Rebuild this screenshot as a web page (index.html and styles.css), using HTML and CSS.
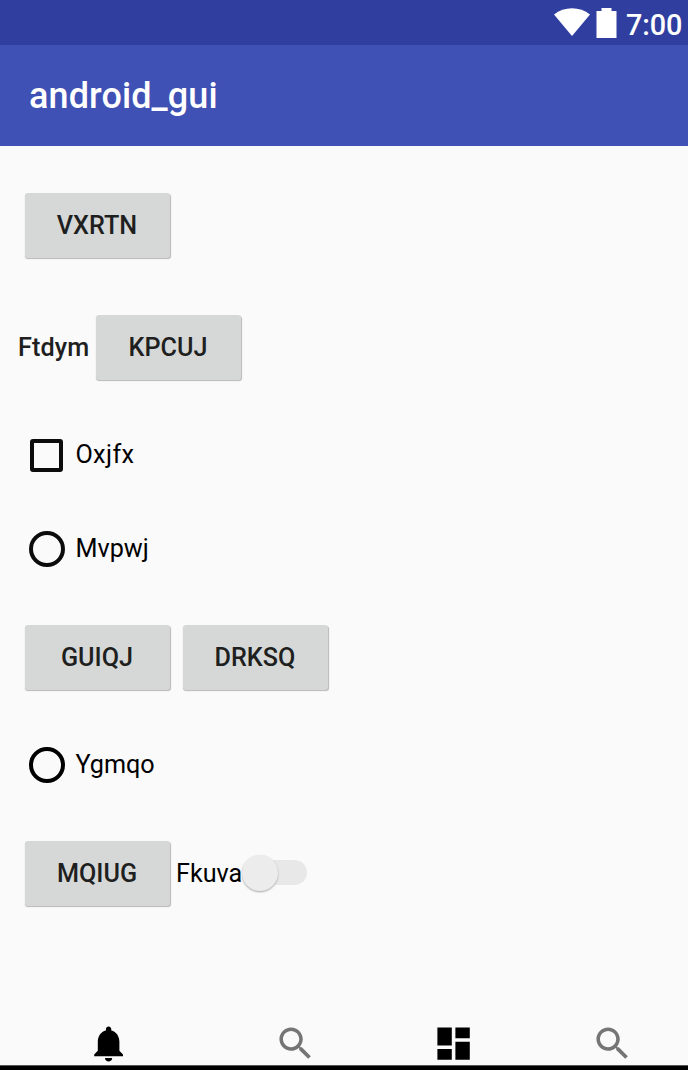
FILE: index.html
```html
<!DOCTYPE html>
<html lang="en">
<head>
<meta charset="utf-8">
<title>android_gui</title>
<link rel="stylesheet" href="styles.css">
</head>
<body>
<div class="screen">
  <header class="status-bar">
    <svg class="wifi" viewBox="0 0 36 28"><path d="M0 6.500C10-2 26-2 36 6.500L18 28z"/></svg>
    <svg class="battery" viewBox="0 0 21 31"><path d="M5.500 0h10v3h5v27H.5V3h5z"/></svg>
    <span class="clock">7:00</span>
  </header>
  <div class="app-bar"><h1 class="title">android_gui</h1></div>
  <main class="content">
    <div class="row"><button class="button">VXRTN</button></div>
    <div class="row labelled"><span class="label">Ftdym</span><button class="button">KPCUJ</button></div>
    <label class="row option"><span class="checkbox"></span><span class="text loose">Oxjfx</span></label>
    <label class="row option"><span class="radio"></span><span class="text">Mvpwj</span></label>
    <div class="row"><button class="button">GUIQJ</button><button class="button">DRKSQ</button></div>
    <label class="row option"><span class="radio solid"></span><span class="text">Ygmqo</span></label>
    <div class="row"><button class="button">MQIUG</button><label class="switch"><span class="text">Fkuva</span><span class="toggle"><span class="track"></span><span class="thumb"></span></span></label></div>
  </main>
  <nav class="bottom-nav">
    <svg class="icon bell" viewBox="0 0 24 24"><path d="M12 22c1.100 0 2-.9 2-2h-4c0 1.100.89 2 2 2zm6-6v-5c0-3.070-1.640-5.640-4.500-6.320V4c0-.83-.67-1.500-1.500-1.500s-1.500.67-1.500 1.500v.68C7.630 5.360 6 7.920 6 11v5l-2 2v1h16v-1l-2-2z"/></svg>
    <svg class="icon find" viewBox="0 0 24 24"><path d="M15.500 14h-.79l-.28-.27C15.410 12.590 16 11.110 16 9.500 16 5.910 13.090 3 9.500 3S3 5.910 3 9.500 5.910 16 9.500 16c1.610 0 3.090-.59 4.230-1.570l.27.28v.79l5 4.990L20.490 19l-4.990-5zm-6 0C7.010 14 5 11.990 5 9.500S7.010 5 9.500 5 14 7.010 14 9.500 11.990 14 9.500 14z"/></svg>
    <svg class="icon dashboard" viewBox="0 0 24 24"><path d="M3 13h8V3H3v10zm0 8h8v-6H3v6zm10 0h8V11h-8v10zm0-18v6h8V3h-8z"/></svg>
    <svg class="icon find last" viewBox="0 0 24 24"><path d="M15.500 14h-.79l-.28-.27C15.410 12.590 16 11.110 16 9.500 16 5.910 13.090 3 9.500 3S3 5.910 3 9.500 5.910 16 9.500 16c1.610 0 3.090-.59 4.230-1.570l.27.28v.79l5 4.990L20.490 19l-4.990-5zm-6 0C7.010 14 5 11.990 5 9.500S7.010 5 9.500 5 14 7.010 14 9.500 11.990 14 9.500 14z"/></svg>
  </nav>
  <div class="system-edge"></div>
</div>
</body>
</html>
```
FILE: styles.css
```css
* { box-sizing: border-box; }
body { margin: 0; background: #fafafa; font-family: Roboto, sans-serif; }
.screen { display: flex; flex-direction: column; width: 688px; height: 1070px; overflow: hidden; }
.status-bar { display: flex; justify-content: flex-end; height: 45px; padding: 8px 6px 0 0; background: #303f9f; color: #fff; }
.status-bar svg { fill: #fff; flex: none; }
.wifi { width: 36px; height: 28px; }
.battery { width: 21px; height: 31px; margin-left: 6px; }
.clock { width: 56px; margin-left: 9px; font-size: 28.800px; line-height: 34px; font-weight: 500; letter-spacing: -.1px; }
.app-bar { display: flex; align-items: center; height: 101px; padding-left: 29px; background: #3f51b5; }
.title { margin: 0; color: #fff; font-size: 36px; line-height: 42px; font-weight: 500; letter-spacing: .1px; }
.content { flex: 1; padding: 46.500px 0 0 24.500px; }
.row { display: flex; align-items: center; height: 66px; gap: 13px; margin-bottom: 56px; }
.labelled { margin-left: -6.500px; gap: 6.500px; }
.option { height: 37px; gap: 10.500px; margin-bottom: 57px; padding-left: 4.500px; }
.button { width: 145px; height: 65px; padding: 0 0 1px; border: 0; border-radius: 3px; background: #d6d8d7; box-shadow: .5px 1px 1px #b8b8b8; color: #1e1f1e; font: 500 25.200px Roboto, sans-serif; }
.label { width: 71px; color: #202020; font-size: 25.200px; font-weight: 500; line-height: 30px; letter-spacing: .1px; }
.text { color: #000; font-size: 25.200px; line-height: 30px; }
.loose { letter-spacing: .4px; }
.checkbox { width: 33px; height: 33px; margin: 1px 2px 0 .9px; border: 4px solid #0c0c0c; border-radius: 3px; }
.radio { width: 36px; height: 36px; border: 4px solid #0c0c0c; border-radius: 50%; }
.solid { border-color: #000; }
.switch { display: flex; align-items: center; margin-left: -6.500px; }
.toggle { display: flex; align-items: center; width: 66px; height: 38px; margin: -2px 0 0 -.5px; }
.thumb { order: -1; flex: none; width: 36px; height: 36px; border-radius: 50%; background: #ececec; box-shadow: 0 1px 2px #a8a8a8; z-index: 1; }
.track { flex: none; width: 47px; height: 25px; margin-left: -18px; border-radius: 13px; background: #e8e8e8; }
.bottom-nav { display: flex; height: 43px; padding-left: 86.600px; }
.icon { flex: none; width: 43.200px; height: 43.200px; fill: #000; }
.find { margin-left: 144.200px; fill: #757575; }
.dashboard { margin-left: 114.500px; }
.last { margin-left: 116px; }
.system-edge { position: relative; z-index: 1; flex: none; height: 5px; background: #000; border-top: 1px solid #555; }
```
